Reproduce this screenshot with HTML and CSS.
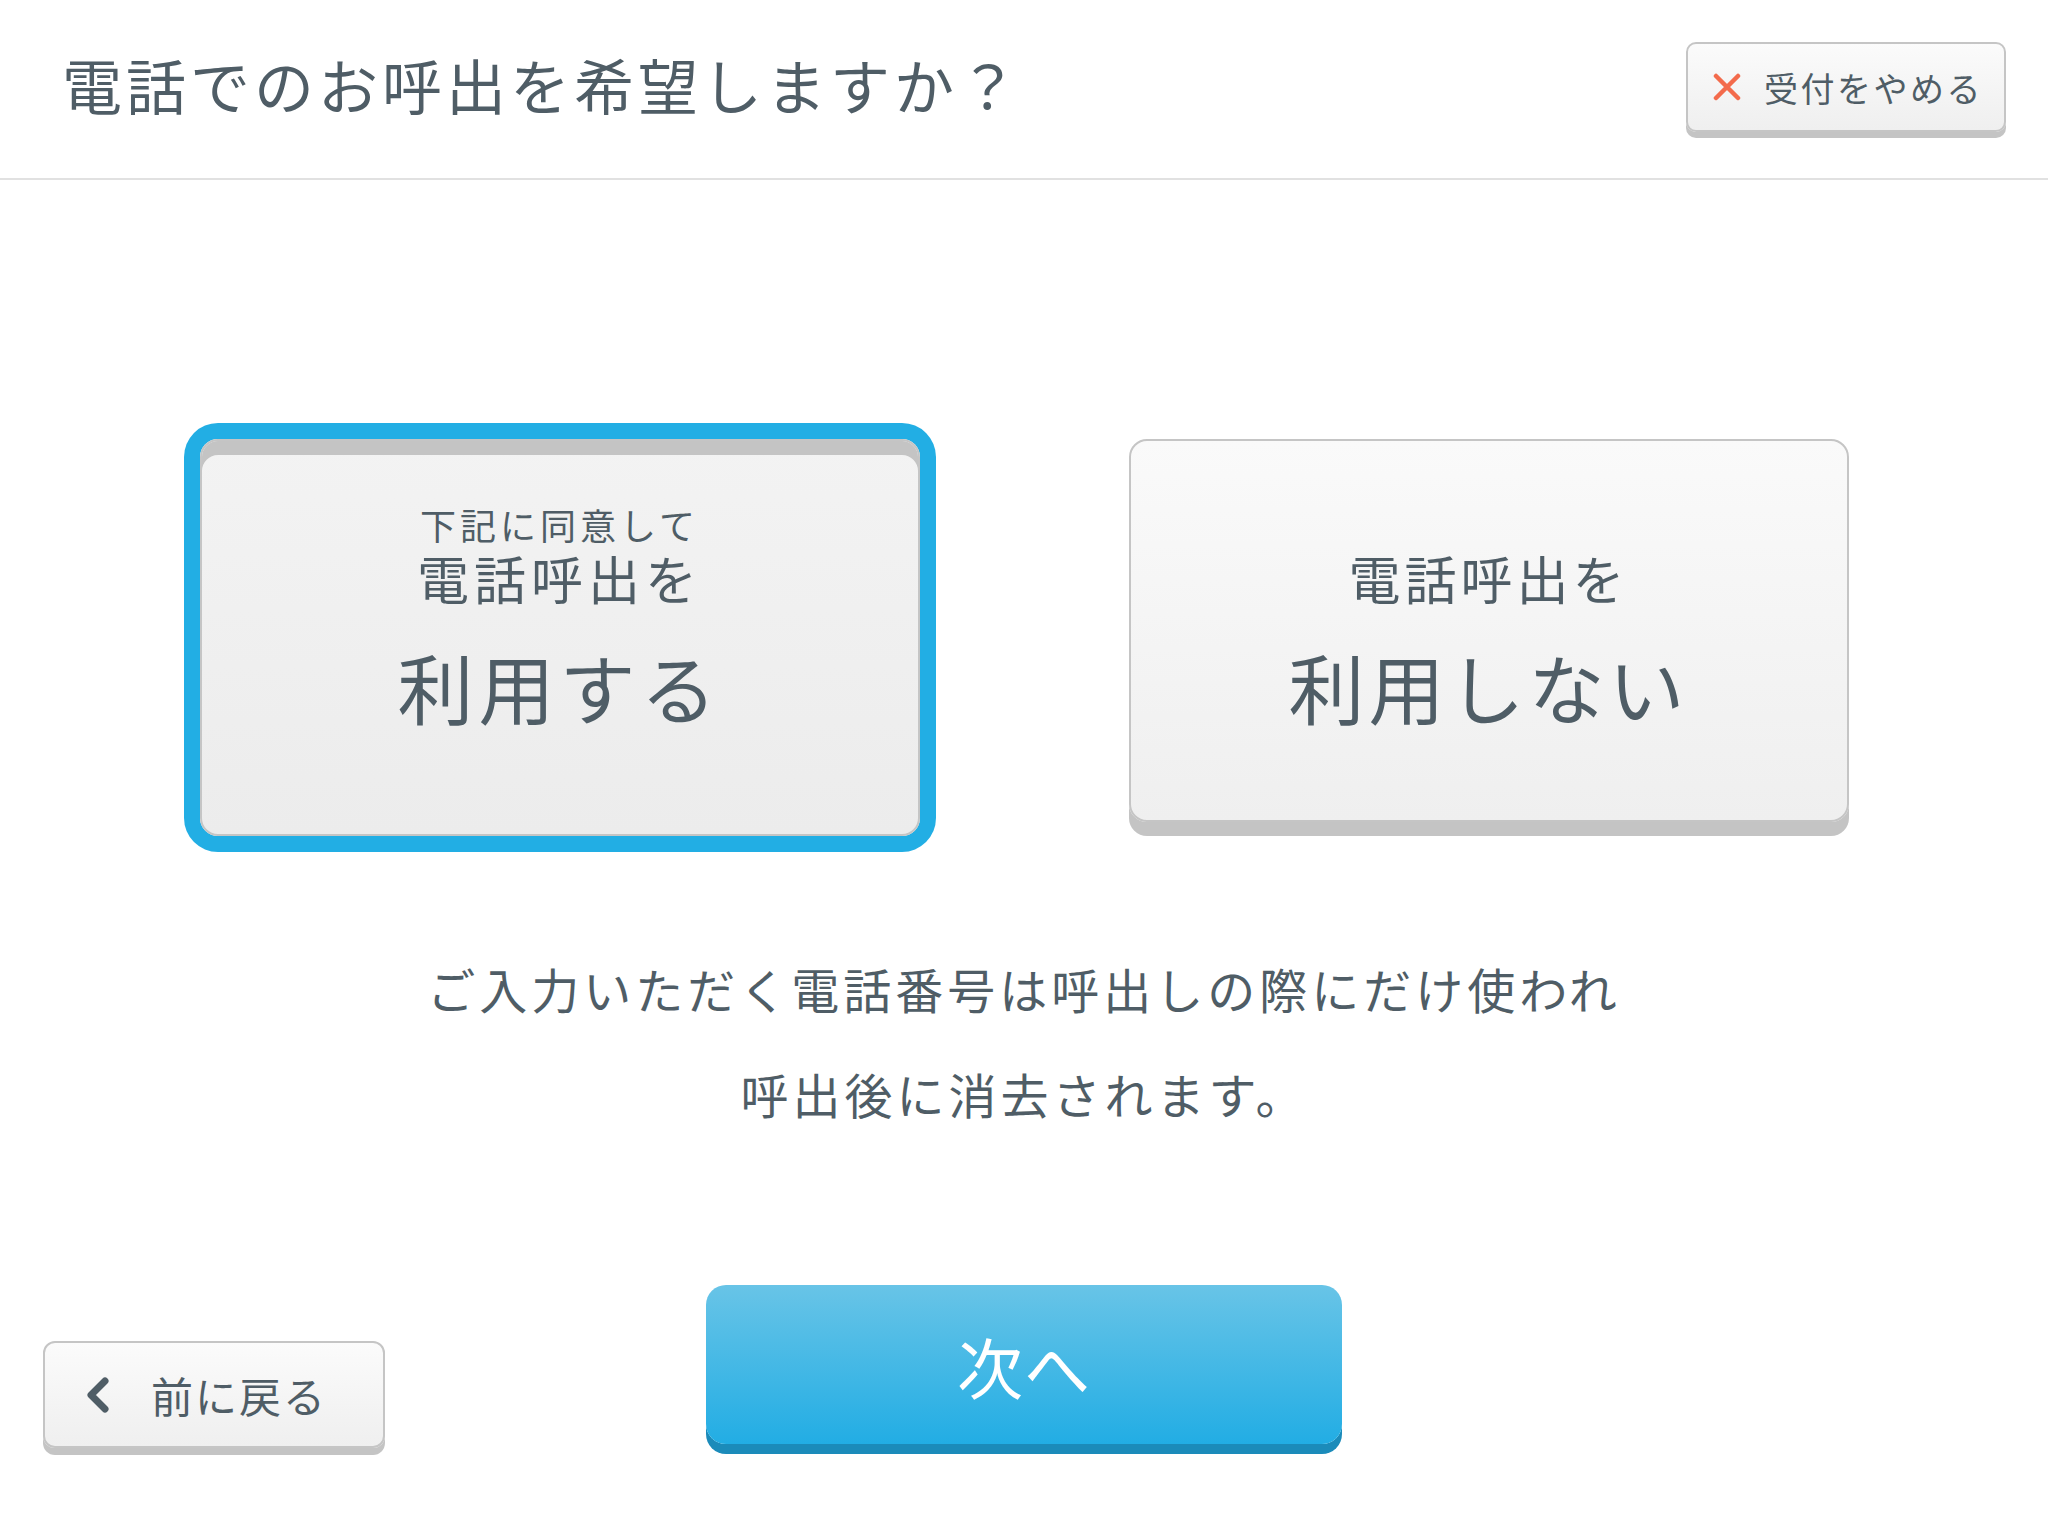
FILE: index.html
```html
<!DOCTYPE html>
<html lang="ja">
<head>
  <meta charset="UTF-8">
  <title>電話呼出の確認</title>
  <link rel="stylesheet" href="styles.css">
</head>
<body>
  <header class="topbar">
    <h1 class="title">電話でのお呼出を希望しますか？</h1>
    <button class="cancel-button" type="button">
      <svg class="cancel-icon" viewBox="0 0 28 28">
        <path d="M3 3 L25 25 M25 3 L3 25" />
      </svg>
      <span>受付をやめる</span>
    </button>
  </header>

  <main class="content">
    <div class="choices">
      <button class="choice selected" type="button">
        <span class="choice-note">下記に同意して</span>
        <span class="choice-lead">電話呼出を</span>
        <span class="choice-main">利用する</span>
      </button>
      <button class="choice plain" type="button">
        <span class="choice-lead">電話呼出を</span>
        <span class="choice-main">利用しない</span>
      </button>
    </div>

    <p class="notice">ご入力いただく電話番号は呼出しの際にだけ使われ<br>呼出後に消去されます。</p>
  </main>

  <footer class="footer">
    <button class="back-button" type="button">
      <svg class="back-icon" viewBox="0 0 22 36">
        <path d="M18 4 L4 18 L18 32" />
      </svg>
      <span>前に戻る</span>
    </button>
    <button class="next-button" type="button">次へ</button>
    <div></div>
  </footer>
</body>
</html>
```

FILE: styles.css
```css
:root {
  --text: #4f5d66;
  --blue: #22aee4;
  --edge: #c5c5c5;
  --ledge: #c4c4c4;
}
body {
  margin: 0;
  width: 2048px;
  height: 1536px;
  background: #fff;
  color: var(--text);
  font-family: "Noto Sans CJK JP", "Noto Sans", sans-serif;
  overflow: hidden;
}
button {
  font-family: inherit;
  color: inherit;
  cursor: pointer;
  padding: 0;
}

/* header */
.topbar {
  height: 178px;
  border-bottom: 2px solid #e1e1e1;
  display: flex;
  align-items: center;
  justify-content: space-between;
  padding: 0 42px 0 62px;
}
.title {
  margin: 0;
  font-size: 60px;
  font-weight: 400;
  letter-spacing: 4px;
  line-height: 1;
  margin-top: -10px;
}
.cancel-button {
  width: 320px;
  height: 90px;
  margin-top: -4px;
  border: 2px solid var(--edge);
  border-radius: 10px;
  background: linear-gradient(#fbfbfb, #efefef);
  box-shadow: 0 6px 0 var(--ledge);
  display: flex;
  align-items: center;
  padding-left: 25px;
  gap: 23px;
  font-size: 34px;
  letter-spacing: 2.5px;
}
.cancel-icon {
  width: 28px;
  height: 28px;
  fill: none;
  stroke: #f36b4c;
  stroke-width: 4.5;
  stroke-linecap: round;
}

/* choice cards */
.choices {
  display: flex;
  justify-content: center;
  align-items: flex-start;
  gap: 209px;
  margin-top: 259px;
}
.choice {
  width: 720px;
  height: 383px;
  border: 2px solid var(--edge);
  border-radius: 18px;
  background: linear-gradient(#fafafa, #efefef);
  box-shadow: 0 14px 0 var(--ledge);
  display: flex;
  flex-direction: column;
  align-items: center;
  padding-top: 61px;
  box-sizing: border-box;
}
.choice.plain {
  padding-top: 105px;
}
.choice.selected {
  height: 397px;
  background: linear-gradient(#f3f3f3, #ececec);
  box-shadow: inset 0 14px 0 var(--ledge), 0 0 0 16px var(--blue);
}
.choice-note {
  font-size: 36px;
  line-height: 44px;
  letter-spacing: 4px;
}
.choice-lead {
  font-size: 52px;
  line-height: 64px;
  letter-spacing: 5px;
}
.choice-main {
  font-size: 76px;
  line-height: 100px;
  margin-top: 26px;
  letter-spacing: 5px;
}
.plain .choice-lead,
.plain .choice-main {
  letter-spacing: 4px;
}

/* notice */
.notice {
  margin: 100px 0 0;
  text-align: center;
  font-size: 48px;
  line-height: 105px;
  letter-spacing: 4px;
}

/* footer */
.footer {
  display: grid;
  grid-template-columns: 1fr auto 1fr;
  align-items: start;
  padding: 0 43px;
  margin-top: 139px;
}
.back-button {
  justify-self: start;
  width: 342px;
  height: 107px;
  margin-top: 56px;
  border: 2px solid var(--edge);
  border-radius: 12px;
  background: linear-gradient(#fbfbfb, #efefef);
  box-shadow: 0 7px 0 var(--ledge);
  display: flex;
  align-items: center;
  padding-left: 42px;
  gap: 42px;
  font-size: 42px;
  letter-spacing: 2px;
}
.back-icon {
  width: 22px;
  height: 36px;
  fill: none;
  stroke: var(--text);
  stroke-width: 7;
  stroke-linecap: round;
  stroke-linejoin: round;
}
.next-button {
  width: 636px;
  height: 159px;
  border: none;
  border-radius: 20px;
  background: linear-gradient(#68c4e7, #22ade4);
  box-shadow: 0 10px 0 #1b8bba;
  color: #fff;
  font-size: 66px;
  letter-spacing: 1px;
}
```
